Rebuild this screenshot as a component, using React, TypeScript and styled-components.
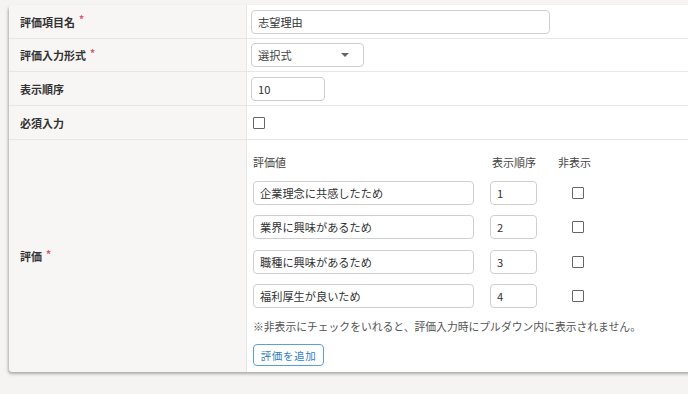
import styled, { createGlobalStyle } from "styled-components";

const GlobalStyle = createGlobalStyle`
  html, body {
    margin: 0;
    padding: 0;
    background: #f5f4f2;
    overflow: hidden;
  }
  body {
    font-family: "Noto Sans CJK JP", "Noto Sans", sans-serif;
    color: #333;
  }
`;

const Page = styled.div`
  padding: 5px 0 0 9px;
  width: 688px;
  height: 394px;
  box-sizing: border-box;
`;

const Card = styled.div`
  width: 700px;
  background: #fff;
  border-radius: 4px;
  box-shadow: -1px 2px 3px rgba(0, 0, 0, 0.3);
  overflow: hidden;
`;

const Row = styled.div<{ $h: number; $last?: boolean }>`
  display: grid;
  grid-template-columns: 238px 1fr;
  height: ${(p) => p.$h}px;
  border-bottom: ${(p) => (p.$last ? "none" : "1px solid #e6e6e6")};
  box-sizing: border-box;
`;

const Label = styled.div`
  background: #f7f6f4;
  border-right: 1px solid #e6e6e6;
  display: flex;
  align-items: center;
  padding-left: 11px;
  font-size: 11px;
  font-weight: 700;
  color: #333;
`;

const Req = styled.span`
  color: #e5506a;
  font-size: 10px;
  margin-left: 4px;
  position: relative;
  top: -3px;
`;

const Field = styled.div`
  display: flex;
  align-items: center;
  padding-left: 4px;
`;

const TextInput = styled.div<{ $w: number }>`
  width: ${(p) => p.$w}px;
  height: 24px;
  box-sizing: border-box;
  border: 1px solid #cfcfcf;
  border-radius: 4px;
  background: #fff;
  display: flex;
  align-items: center;
  padding-left: 6px;
  font-size: 11.2px;
  color: #333;
  white-space: nowrap;
`;

const Select = styled(TextInput)`
  justify-content: space-between;
  padding-right: 14px;
  color: #444;
`;

const Caret = styled.span`
  width: 0;
  height: 0;
  border-left: 4px solid transparent;
  border-right: 4px solid transparent;
  border-top: 4px solid #666;
`;

const Check = styled.span`
  display: inline-block;
  width: 10px;
  height: 10px;
  border: 1px solid #666;
  border-radius: 1px;
  background: #fff;
`;

const Options = styled.div`
  padding: 15px 0 0 6px;
`;

const OptGrid = styled.div`
  display: grid;
  grid-template-columns: 221px 47px 50px;
  column-gap: 16px;
  align-items: center;
`;

const Head = styled.div<{ $pad?: number }>`
  font-size: 11px;
  color: #444;
  padding-left: ${(p) => p.$pad ?? 0}px;
  height: 14px;
  line-height: 14px;
  margin-bottom: 12px;
  white-space: nowrap;
`;

const OptRow = styled(OptGrid)`
  margin-bottom: 10.3px;
`;

const CheckCell = styled.div`
  display: flex;
  padding-left: 19px;
`;

const Note = styled.div`
  font-size: 10.8px;
  color: #555;
  margin-top: 2px;
  white-space: nowrap;
`;

const AddButton = styled.button`
  margin-top: 10px;
  width: 71px;
  height: 22px;
  border: 1px solid #5b9fd6;
  border-radius: 4px;
  background: #fff;
  color: #2f7fc1;
  font-family: inherit;
  font-size: 10.5px;
  letter-spacing: 0.6px;
  padding: 0;
`;

const options = [
  { label: "企業理念に共感したため", order: "1" },
  { label: "業界に興味があるため", order: "2" },
  { label: "職種に興味があるため", order: "3" },
  { label: "福利厚生が良いため", order: "4" },
];

export default function App() {
  return (
    <Page>
      <GlobalStyle />
      <Card>
        <Row $h={34}>
          <Label>
            評価項目名<Req>*</Req>
          </Label>
          <Field>
            <TextInput $w={299}>志望理由</TextInput>
          </Field>
        </Row>
        <Row $h={33}>
          <Label>
            評価入力形式<Req>*</Req>
          </Label>
          <Field>
            <Select $w={113}>
              選択式
              <Caret />
            </Select>
          </Field>
        </Row>
        <Row $h={34}>
          <Label>表示順序</Label>
          <Field>
            <TextInput $w={74}>10</TextInput>
          </Field>
        </Row>
        <Row $h={34}>
          <Label>必須入力</Label>
          <Field>
            <Check style={{ marginLeft: 2 }} />
          </Field>
        </Row>
        <Row $h={232} $last>
          <Label>
            評価<Req>*</Req>
          </Label>
          <Options>
            <OptGrid>
              <Head>評価値</Head>
              <Head $pad={2}>表示順序</Head>
              <Head $pad={5}>非表示</Head>
            </OptGrid>
            {options.map((o) => (
              <OptRow key={o.order}>
                <TextInput $w={221}>{o.label}</TextInput>
                <TextInput $w={47}>{o.order}</TextInput>
                <CheckCell>
                  <Check />
                </CheckCell>
              </OptRow>
            ))}
            <Note>※非表示にチェックをいれると、評価入力時にプルダウン内に表示されません。</Note>
            <AddButton>評価を追加</AddButton>
          </Options>
        </Row>
      </Card>
    </Page>
  );
}
